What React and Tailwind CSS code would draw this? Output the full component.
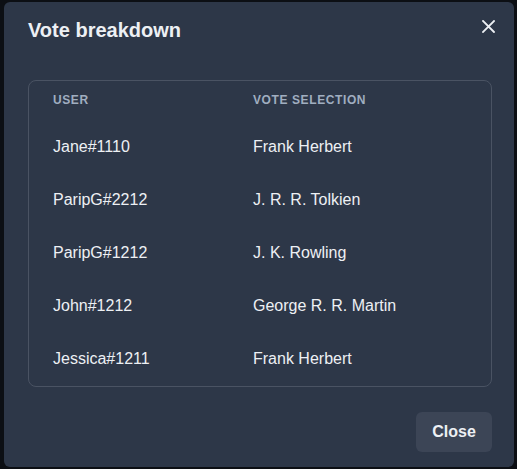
export default function App() {
  const rows = [
    ["Jane#1110", "Frank Herbert"],
    ["ParipG#2212", "J. R. R. Tolkien"],
    ["ParipG#1212", "J. K. Rowling"],
    ["John#1212", "George R. R. Martin"],
    ["Jessica#1211", "Frank Herbert"],
  ];
  return (
    <div
      className="relative w-[517px] h-[469px] overflow-hidden bg-[#0c0f14] pl-[4px] pt-[2px]"
      style={{ fontFamily: '"Liberation Sans", Arial, sans-serif' }}
    >
      <div className="relative flex flex-col w-[510px] h-[465px] rounded-md bg-[#2d3748] text-[#edf0f4]">
        <div className="px-6 pt-[13px] text-[20px] leading-[30px] font-bold">Vote breakdown</div>
        <button className="absolute top-[8px] right-[10px] w-8 h-8 flex items-center justify-center text-[#edf0f4]">
          <svg width="13" height="13" viewBox="0 0 13 13" fill="none" stroke="currentColor" strokeWidth="1.8" strokeLinecap="square">
            <path d="M1 1L12 12M12 1L1 12" />
          </svg>
        </button>
        <div className="ml-6 w-[464px] mt-[35px] pb-[1px] rounded-lg border border-[#4a5363]">
          <div className="grid grid-cols-[200px_1fr] px-6 pt-[11px] pb-3 text-[12px] leading-4 font-bold tracking-wider text-[#a0aec0]">
            <div>USER</div>
            <div>VOTE SELECTION</div>
          </div>
          {rows.map(([u, v], i) => (
            <div key={i} className="grid grid-cols-[200px_1fr] px-6 h-[53px] items-center text-[16px] leading-5">
              <div>{u}</div>
              <div>{v}</div>
            </div>
          ))}
        </div>
        <div className="mt-auto flex justify-end pr-[22px] pb-[15px]">
          <button className="h-10 w-[76px] rounded-md bg-[#3c4556] text-[16px] font-bold text-[#edf0f4]">Close</button>
        </div>
      </div>
    </div>
  );
}
